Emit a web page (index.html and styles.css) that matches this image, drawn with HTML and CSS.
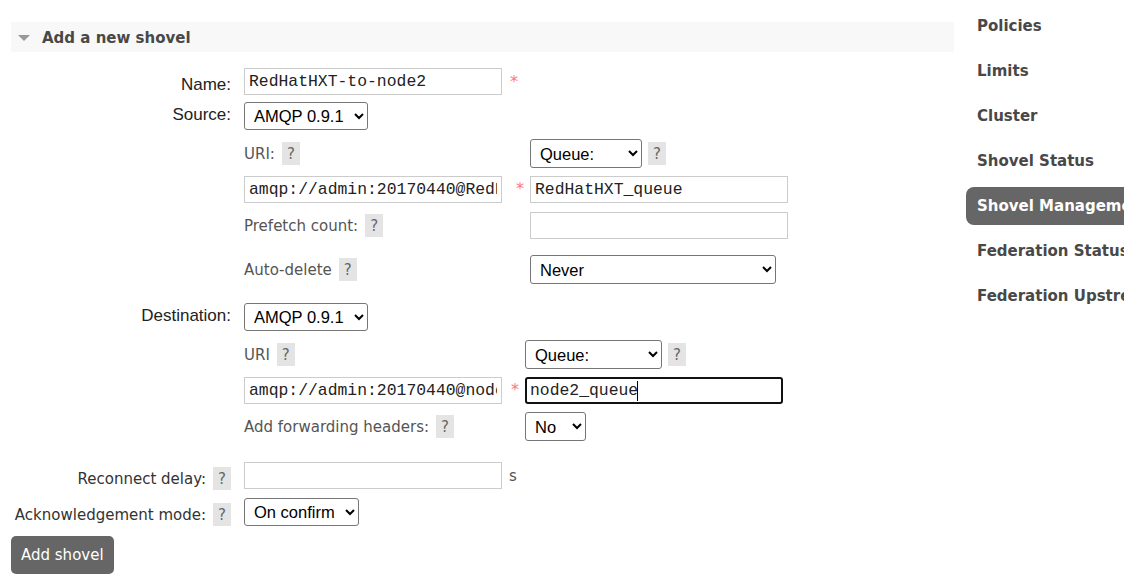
FILE: index.html
```html
<!DOCTYPE html>
<html>
<head>
<meta charset="utf-8">
<title>Add a new shovel</title>
<link rel="stylesheet" href="styles.css">
</head>
<body>
<div class="page">
  <main class="main">
    <div class="section-head"><span class="tri"></span><h2 class="section-title">Add a new shovel</h2></div>
    <form class="form">
      <div class="row row-name">
        <div class="lbl lbl-name">Name:</div>
        <div class="field field-row">
          <input class="txt" type="text" value="RedHatHXT-to-node2">
          <span class="req req-name">*</span>
        </div>
      </div>

      <div class="row row-source">
        <div class="lbl lbl-sel">Source:</div>
        <div class="field">
          <select class="sel sel-proto"><option>AMQP 0.9.1</option></select>
          <div class="sub">
            <div class="subrow">
              <div class="sub-left"><span class="sublbl">URI:</span><span class="help">?</span></div>
              <div class="star star-src"></div>
              <div class="sub-right"><select class="sel sel-queue-src"><option>Queue:</option></select><span class="help help-side">?</span></div>
            </div>
            <div class="subrow subrow-top sr-gap8">
              <div class="sub-left"><input class="txt" type="text" value="amqp://admin:20170440@RedHatHXT"></div>
              <div class="star star-src"><span class="req">*</span></div>
              <div class="sub-right"><input class="txt" type="text" value="RedHatHXT_queue"></div>
            </div>
            <div class="subrow sr-gap9">
              <div class="sub-left"><span class="sublbl">Prefetch count:</span><span class="help">?</span></div>
              <div class="star star-src"></div>
              <div class="sub-right"><input class="txt" type="text" value=""></div>
            </div>
            <div class="subrow sr-gap16">
              <div class="sub-left"><span class="sublbl">Auto-delete</span><span class="help">?</span></div>
              <div class="star star-src"></div>
              <div class="sub-right"><select class="sel sel-never"><option>Never</option></select></div>
            </div>
          </div>
        </div>
      </div>

      <div class="row row-dest">
        <div class="lbl lbl-sel">Destination:</div>
        <div class="field">
          <select class="sel sel-proto"><option>AMQP 0.9.1</option></select>
          <div class="sub">
            <div class="subrow">
              <div class="sub-left"><span class="sublbl">URI</span><span class="help">?</span></div>
              <div class="star star-dst"></div>
              <div class="sub-right"><select class="sel sel-queue-dst"><option>Queue:</option></select><span class="help help-side">?</span></div>
            </div>
            <div class="subrow subrow-top sr-gap8">
              <div class="sub-left"><input class="txt" type="text" value="amqp://admin:20170440@node2"></div>
              <div class="star star-dst"><span class="req">*</span></div>
              <div class="sub-right focus-wrap"><input class="txt txt-focus" type="text" value="node2_queue"><span class="caret"></span></div>
            </div>
            <div class="subrow sr-gap8">
              <div class="sub-left"><span class="sublbl">Add forwarding headers:</span><span class="help">?</span></div>
              <div class="star star-dst"></div>
              <div class="sub-right"><select class="sel sel-no"><option>No</option></select></div>
            </div>
          </div>
        </div>
      </div>

      <div class="row row-reconnect">
        <div class="lbl lbl-help">Reconnect delay:<span class="help">?</span></div>
        <div class="field field-row field-center">
          <input class="txt" type="text" value="">
          <span class="unit">s</span>
        </div>
      </div>

      <div class="row row-ack">
        <div class="lbl lbl-help">Acknowledgement mode:<span class="help">?</span></div>
        <div class="field">
          <select class="sel sel-ack"><option>On confirm</option></select>
        </div>
      </div>

      <button class="btn" type="button">Add shovel</button>
    </form>
  </main>

  <nav class="nav">
    <a class="nav-item">Policies</a>
    <a class="nav-item">Limits</a>
    <a class="nav-item">Cluster</a>
    <a class="nav-item">Shovel Status</a>
    <a class="nav-item active">Shovel Management</a>
    <a class="nav-item">Federation Status</a>
    <a class="nav-item">Federation Upstreams</a>
  </nav>
</div>
</body>
</html>
```

FILE: styles.css
```css
* { box-sizing: border-box; }
html, body {
  margin: 0;
  padding: 0;
  overflow: hidden;
  background: #fff;
}
body {
  font-family: "DejaVu Sans", Verdana, sans-serif;
  color: #484848;
  width: 1124px;
  height: 586px;
}
.page {
  display: flex;
  align-items: flex-start;
  width: 1124px;
  overflow: hidden;
}
.main {
  flex: none;
  width: 943px;
  margin-left: 11px;
}

/* section header */
.section-head {
  margin-top: 22px;
  height: 30px;
  background: #f8f8f8;
  display: flex;
  align-items: center;
  padding-left: 7px;
  padding-top: 2px;
}
.tri {
  width: 0;
  height: 0;
  border-left: 6px solid transparent;
  border-right: 6px solid transparent;
  border-top: 6px solid #999;
  margin-right: 12px;
}
.section-title {
  margin: 0;
  font-size: 15px;
  font-weight: bold;
  line-height: 18px;
  color: #484848;
}

/* form rows */
.row {
  display: grid;
  grid-template-columns: 220px 1fr;
  column-gap: 13px;
  align-items: start;
}
.row-name { margin-top: 16px; }
.row-source { margin-top: 7px; }
.row-dest { margin-top: 19px; }
.row-reconnect { margin-top: 21px; }
.row-ack { margin-top: 8px; }

.lbl {
  text-align: right;
  font-family: "Liberation Sans", Arial, sans-serif;
  font-size: 17px;
  line-height: 20px;
  color: #222;
}
.lbl-name { padding-top: 7px; }
.lbl-sel { padding-top: 3px; }
.lbl-help {
  display: flex;
  justify-content: flex-end;
  align-items: center;
  padding-top: 5px;
  font-family: "DejaVu Sans", Verdana, sans-serif;
  font-size: 15px;
  color: #333;
}

.field {
  display: flex;
  flex-direction: column;
  align-items: flex-start;
}
.field-row {
  flex-direction: row;
  align-items: flex-start;
}
.field-center { align-items: center; }

/* controls */
.txt {
  width: 258px;
  height: 27px;
  margin: 0;
  border: 1px solid #ccc;
  padding: 0 4px;
  font-family: "Liberation Mono", "Courier New", monospace;
  font-size: 16.4px;
  color: #222;
  background: #fff;
  outline: none;
}
.txt-focus {
  border: 2px solid #111;
  border-radius: 3px;
  padding-left: 3px;
}
.sel {
  height: 28px;
  margin: 0;
  font-family: "Liberation Sans", Arial, sans-serif;
  font-size: 16.5px;
  color: #000;
  border: 1px solid #767676;
  border-radius: 3px;
  background-color: #fff;
  padding: 0 0 0 5px;
}
.sel-proto { width: 124px; }
.sel-queue-src { width: 112px; height: 29px; }
.sel-queue-dst { width: 137px; height: 29px; }
.sel-never { width: 246px; height: 29px; }
.sel-no { width: 61px; height: 29px; }
.sel-ack { width: 115px; }

.req {
  display: block;
  font-family: "DejaVu Sans", Verdana, sans-serif;
  font-size: 16px;
  line-height: 16px;
  color: #f77;
  margin-top: 5px;
}
.req-name { margin-left: 8px; margin-top: 6px; }

.help {
  display: inline-flex;
  align-items: center;
  justify-content: center;
  flex: none;
  width: 18px;
  height: 23px;
  margin-left: 7px;
  background: #e4e4e4;
  color: #666;
  font-family: "DejaVu Sans", Verdana, sans-serif;
  font-size: 15px;
}
.help-side { margin-left: 6px; }

/* source / destination sub blocks */
.sub { margin-top: 9px; }
.subrow {
  display: flex;
  align-items: center;
}
.subrow-top { align-items: flex-start; }
.sr-gap8 { margin-top: 8px; }
.sr-gap9 { margin-top: 9px; }
.sr-gap16 { margin-top: 16px; }
.sub-left {
  flex: none;
  width: 258px;
  display: flex;
  align-items: center;
}
.star { flex: none; }
.star-src { width: 28px; padding-left: 14px; }
.star-dst { width: 23px; padding-left: 9px; }
.sub-right {
  display: flex;
  align-items: center;
}
.sublbl {
  font-size: 15px;
  color: #555;
}
.focus-wrap { position: relative; }
.caret {
  position: absolute;
  left: 112px;
  top: 4px;
  width: 1px;
  height: 20px;
  background: #000;
}
.unit {
  margin-left: 7px;
  font-size: 15px;
  color: #555;
}

.btn {
  display: block;
  margin-top: 10px;
  height: 38px;
  padding: 0 10px;
  background: #666;
  color: #fff;
  border: none;
  border-radius: 5px;
  font-family: "DejaVu Sans", Verdana, sans-serif;
  font-size: 15px;
}

/* side nav */
.nav {
  flex: none;
  width: 220px;
  margin-left: 12px;
  margin-top: 7px;
  display: flex;
  flex-direction: column;
}
.nav-item {
  display: block;
  padding: 10px 11px;
  margin-bottom: 7px;
  line-height: 18px;
  font-size: 15px;
  font-weight: bold;
  color: #484848;
  white-space: nowrap;
  border-radius: 8px 0 0 8px;
  text-decoration: none;
}
.nav-item.active {
  background: #666;
  color: #fff;
}
```
